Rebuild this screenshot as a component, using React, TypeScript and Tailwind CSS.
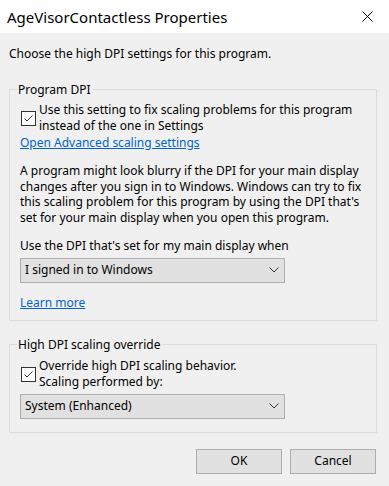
import React from 'react'

function CheckBox() {
  return (
    <div className="mt-[9px] ml-px h-[15px] w-[15px] shrink-0 border border-[#333333] bg-white">
      <svg width="13" height="13" viewBox="0 0 13 13" className="block">
        <polyline points="2.5,6.5 5,9 10.5,3.5" fill="none" stroke="#333333" strokeWidth="1" />
      </svg>
    </div>
  )
}

function Dropdown({ value }: { value: string }) {
  return (
    <div className="flex h-[25px] w-[265px] items-center justify-between border border-[#adadad] bg-[#e1e1e1] pl-[4px] pr-[5px]">
      <span className="leading-[16px]">{value}</span>
      <svg width="10" height="6" viewBox="0 0 10 6">
        <polyline points="0.5,0.5 5,5 9.5,0.5" fill="none" stroke="#333333" strokeWidth="1" />
      </svg>
    </div>
  )
}

function GroupBox({ title, className, children }: { title: string; className?: string; children: React.ReactNode }) {
  return (
    <fieldset className={`w-[368px] border border-[#dcdcdc] px-[10px] ${className ?? ''}`}>
      <legend className="-ml-[3px] px-px leading-[17px]">{title}</legend>
      {children}
    </fieldset>
  )
}

function Button({ label }: { label: string }) {
  return (
    <button className="h-[25px] w-[86px] border border-[#adadad] bg-[#e1e1e1] leading-[16px] text-black">
      {label}
    </button>
  )
}

export default function App() {
  return (
    <div className="flex h-[486px] w-[389px] flex-col bg-[#f0f0f0] font-['Noto_Sans',sans-serif] text-[12px] text-black">
      {/* Title bar */}
      <div className="flex h-[33px] shrink-0 items-center justify-between bg-white pl-[7px] pr-[16px]">
        <span className="text-[15px] leading-[20px]">AgeVisorContactless Properties</span>
        <svg width="11" height="11" viewBox="0 0 11 11">
          <path d="M0.5 0.5 L10.5 10.5 M10.5 0.5 L0.5 10.5" stroke="#000" strokeWidth="1" />
        </svg>
      </div>

      <div className="px-[9px] pt-[13px]">
        <p className="leading-[16px] whitespace-nowrap">Choose the high DPI settings for this program.</p>

        <GroupBox title="Program DPI" className="mt-[19px] pb-[9px]">
          <div className="mt-[4px] flex gap-[3px]">
            <CheckBox />
            <p className="leading-[16px] whitespace-nowrap">
              Use this setting to fix scaling problems for this program
              <br />
              instead of the one in Settings
            </p>
          </div>
          <a className="mt-px block w-fit leading-[16px] text-[#0066cc] underline">Open Advanced scaling settings</a>

          <p className="mt-[12px] leading-[15.67px] whitespace-nowrap">
            A program might look blurry if the DPI for your main display
            <br />
            changes after you sign in to Windows. Windows can try to fix
            <br />
            this scaling problem for this program by using the DPI that's
            <br />
            set for your main display when you open this program.
          </p>

          <p className="mt-[12px] leading-[16px] whitespace-nowrap">Use the DPI that's set for my main display when</p>
          <div className="mt-[4px]">
            <Dropdown value="I signed in to Windows" />
          </div>

          <a className="mt-[12px] block w-fit leading-[16px] text-[#0066cc] underline">Learn more</a>
        </GroupBox>

        <GroupBox title="High DPI scaling override" className="mt-[15px] pb-[13px]">
          <div className="mt-[5px] flex gap-[3px]">
            <CheckBox />
            <p className="leading-[16px] whitespace-nowrap">
              Override high DPI scaling behavior.
              <br />
              Scaling performed by:
            </p>
          </div>
          <div className="mt-[4px]">
            <Dropdown value="System (Enhanced)" />
          </div>
        </GroupBox>

        <div className="mt-[16px] flex w-[367px] justify-end gap-[8px]">
          <Button label="OK" />
          <Button label="Cancel" />
        </div>
      </div>
    </div>
  )
}
